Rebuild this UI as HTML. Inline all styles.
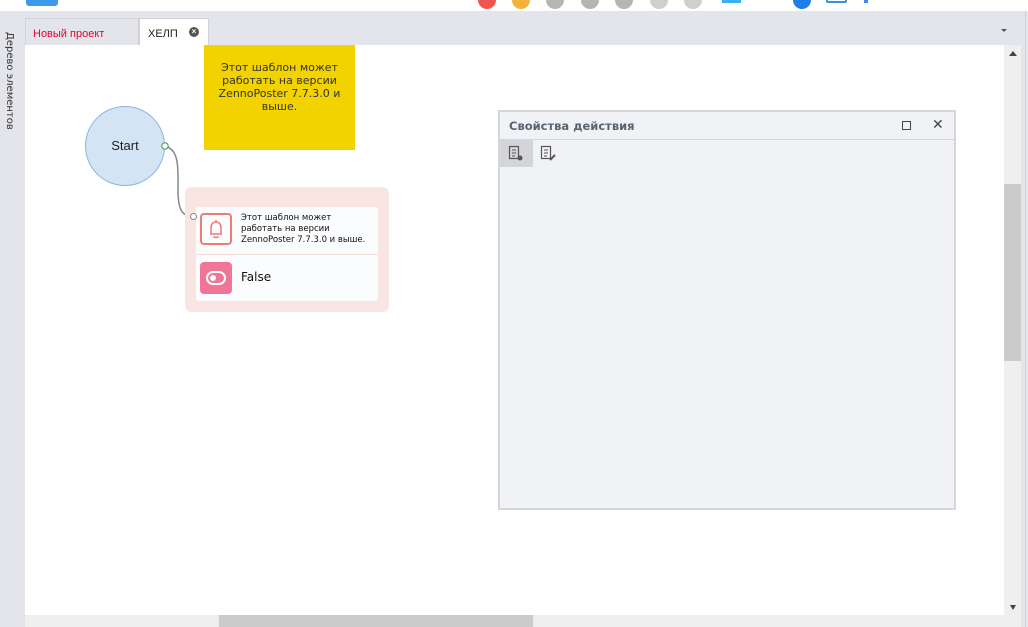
<!DOCTYPE html>
<html><head><meta charset="utf-8"><style>
*{margin:0;padding:0;box-sizing:border-box}
body{width:1028px;height:627px;overflow:hidden;background:#e4e5ea;font-family:"Liberation Sans","DejaVu Sans",sans-serif;position:relative}
.a{position:absolute}
.c{position:absolute;border-radius:50%;width:18px;height:18px;top:-9px}
.dj{font-family:"DejaVu Sans",sans-serif}
</style></head><body>
<div class="a" style="left:0;top:0;width:1028px;height:11px;background:#fff"></div>
<div class="a" style="left:26px;top:-8px;width:32px;height:14px;background:#3d9be9;border-radius:3px"></div>
<div class="c" style="left:478px;background:#f0554f"></div>
<div class="c" style="left:512px;background:#f4b23a"></div>
<div class="c" style="left:546px;background:#b5b5b5"></div>
<div class="c" style="left:581px;background:#b5b5b5"></div>
<div class="c" style="left:615px;background:#b5b5b5"></div>
<div class="c" style="left:650px;background:#cfcfcf"></div>
<div class="c" style="left:684px;background:#cfcfcf"></div>
<div class="a" style="left:722px;top:0;width:19px;height:3px;background:#3ab0ee"></div>
<div class="c" style="left:793px;background:#1f7ee6"></div>
<div class="a" style="left:826px;top:-6px;width:21px;height:9px;border:2px solid #3b8fe0;border-radius:2px"></div>
<div class="a" style="left:864px;top:-6px;width:4px;height:9px;background:#3b8fe0"></div>

<div class="a dj" style="left:2px;top:32px;width:14px;height:100px;writing-mode:vertical-rl;font-size:10px;color:#333;line-height:14px">Дерево элементов</div>

<div class="a" style="left:25px;top:18px;width:114px;height:27px;background:#e4e5ea;border:1px solid #d0d2d8;border-bottom:none;font-size:11px;color:#e8002c;padding:9px 0 0 7px">Новый проект</div>
<div class="a" style="left:139px;top:18px;width:70px;height:28px;background:#fff;border:1px solid #d0d2d8;border-bottom:none;font-size:11px;color:#222;padding:9px 0 0 8px">ХЕЛП</div>
<div class="a" style="left:189px;top:27px;width:10px;height:10px;border-radius:50%;background:#555;color:#fff;font-size:8px;line-height:10px;text-align:center;font-weight:bold">×</div>
<div class="a" style="left:1001px;top:29px;width:0;height:0;border-left:3px solid transparent;border-right:3px solid transparent;border-top:3px solid #555"></div>

<div class="a" style="left:25px;top:45px;width:979px;height:570px;background:#fff"></div>
<div class="a" style="left:1004px;top:45px;width:17px;height:570px;background:#efefef"></div>
<div class="a" style="left:1004px;top:184px;width:17px;height:177px;background:#cbcbcb"></div>
<div class="a" style="left:1009px;top:51px;width:0;height:0;border-left:4px solid transparent;border-right:4px solid transparent;border-bottom:5px solid #444"></div>
<div class="a" style="left:1010px;top:605px;width:0;height:0;border-left:3px solid transparent;border-right:3px solid transparent;border-top:5px solid #444"></div>
<div class="a" style="left:25px;top:615px;width:996px;height:12px;background:#efefef"></div>
<div class="a" style="left:219px;top:615px;width:314px;height:12px;background:#cbcbcb"></div>
<div class="a" style="left:1025px;top:11px;width:1px;height:616px;background:#d0d2d8"></div>

<div class="a dj" style="left:204px;top:45px;width:151px;height:105px;background:#f2d300;font-size:11px;color:#333;text-align:center;line-height:13px;padding:16px 8px 0">Этот шаблон может работать на версии ZennoPoster 7.7.3.0 и выше.</div>

<div class="a" style="left:85px;top:106px;width:80px;height:80px;border-radius:50%;background:#d3e4f5;border:1px solid #8fb4db;font-size:13px;color:#222;text-align:center;line-height:78px">Start</div>
<svg class="a" style="left:160px;top:140px" width="40" height="85"><path d="M5 6 C20 10,18 30,18 50 C18 70,22 76,33 77" fill="none" stroke="#888" stroke-width="1.5"/><circle cx="5" cy="6" r="3.2" fill="#fff" stroke="#3a9a3a" stroke-width="1"/><path d="M29 73 L35 77 L29 80z" fill="#777"/></svg>

<div class="a" style="left:185px;top:187px;width:204px;height:125px;background:#f9e6e3;border-radius:6px"></div>
<div class="a" style="left:196px;top:207px;width:182px;height:94px;background:#fbfcfe;border-radius:3px"></div>
<div class="a" style="left:196px;top:254px;width:182px;height:1px;background:#f5dcd8"></div>
<div class="a" style="left:190px;top:213px;width:7px;height:7px;border-radius:50%;border:1px solid #888;background:#fff"></div>
<div class="a" style="left:200px;top:213px;width:32px;height:32px;border:2px solid #ee7b76;border-radius:4px"></div>
<svg class="a" style="left:200px;top:213px" width="32" height="32"><path d="M10 21 L22 21 M11 21 L11 15 C11 11,13 9,16 9 C19 9,21 11,21 15 L21 21 M16 7 L16 9 M14 23 C14 25,18 25,18 23" fill="none" stroke="#ee7b76" stroke-width="1.5"/></svg>
<div class="a dj" style="left:241px;top:213px;font-size:8.5px;line-height:11px;color:#111">Этот шаблон может<br>работать на версии<br>ZennoPoster 7.7.3.0 и выше.</div>
<div class="a" style="left:200px;top:262px;width:32px;height:32px;background:#f07596;border-radius:4px"></div>
<div class="a" style="left:206px;top:271px;width:20px;height:14px;border:2px solid #fff;border-radius:7px"></div>
<div class="a" style="left:210px;top:275px;width:6px;height:6px;border-radius:50%;background:#fff"></div>
<div class="a dj" style="left:241px;top:270px;font-size:12px;color:#111">False</div>

<div class="a" style="left:498px;top:110px;width:458px;height:400px;background:#f1f2f6;border:2px solid #d4d6dc"></div>
<div class="a" style="left:500px;top:139px;width:454px;height:1px;background:#d4d6dc"></div>
<div class="a dj" style="left:509px;top:119px;font-size:11.5px;font-weight:bold;color:#5a6470">Свойства действия</div>
<div class="a" style="left:902px;top:121px;width:9px;height:9px;border:1px solid #444"></div>
<div class="a" style="left:932px;top:116px;font-size:14px;color:#444">✕</div>
<div class="a" style="left:500px;top:140px;width:33px;height:27px;background:#d3d5db"></div>
<svg class="a" style="left:508px;top:145px" width="20" height="18"><rect x="1.5" y="1.5" width="9" height="12" fill="none" stroke="#555" stroke-width="1.2"/><path d="M4 5h4M4 8h4M4 11h3" stroke="#555"/><circle cx="12" cy="13" r="2.5" fill="#555"/></svg>
<svg class="a" style="left:540px;top:145px" width="20" height="18"><rect x="1.5" y="1.5" width="9" height="12" fill="none" stroke="#555" stroke-width="1.2"/><path d="M4 5h4M4 8h4M4 11h3" stroke="#555"/><path d="M10 15 L15 10" stroke="#555" stroke-width="2"/></svg>
</body></html>
